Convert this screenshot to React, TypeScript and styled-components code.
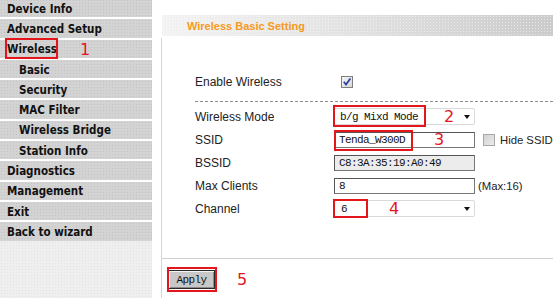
import React from "react"
import styled, { createGlobalStyle } from "styled-components"

// router admin page: left menu + "Wireless Basic Setting" form with red callouts

const Global = createGlobalStyle`
  html, body { margin:0; padding:0; background:#fff; }
  body { width:553px; height:298px; overflow:hidden; font-family:"Liberation Sans", Arial, sans-serif; }
`

const RED = "#e4161c"

const Page = styled.div`
  display:flex;
  width:553px;
  height:298px;
`

// ---- sidebar

const Sidebar = styled.nav`
  width:152px;
  flex:none;
  display:flex;
  flex-direction:column;
  gap:2px;
  margin-top:-1px;
  background:#fff;
`

interface IMenuItem {
    $sub?: boolean
}

const MenuItem = styled.div<IMenuItem>`
  height:18.3px;
  display:flex;
  align-items:center;
  padding-left:${(p) => (p.$sub ? "19px" : "7px")};
  padding-top:1px;
  box-sizing:border-box;
  background-color:#d3d3d3;
  background-image:radial-gradient(#c4c4c4 0.6px, transparent 0.7px);
  background-size:3px 3px;
  font-family:"DejaVu Sans Condensed", "DejaVu Sans", sans-serif;
  font-weight:bold;
  font-size:11.5px;
  color:#111;
  white-space:nowrap;
`

const Filler = styled.div`
  flex:1;
  margin-top:-2px;
  background-color:#efefef;
  background-image:radial-gradient(#e2e2e2 0.6px, transparent 0.7px);
  background-size:3px 3px;
`

// ---- red callouts (drawn on top of the screenshot content)

const Marked = styled.span`
  position:relative;
  display:inline-flex;
  align-items:center;
`

interface IBox {
    $top: number
    $left: number
    $w: number
    $h: number
}

const RedBox = styled.span<IBox>`
  position:absolute;
  top:${(p) => p.$top}px;
  left:${(p) => p.$left}px;
  width:${(p) => p.$w}px;
  height:${(p) => p.$h}px;
  box-sizing:border-box;
  border:2px solid ${RED};
  pointer-events:none;
`

interface INum {
    $left: number
}

const Num = styled.span<INum>`
  position:absolute;
  left:${(p) => p.$left}px;
  top:50%;
  transform:translateY(-50%);
  font-family:"DejaVu Sans", sans-serif;
  font-size:16px;
  line-height:16px;
  color:${RED};
`

const InlineNum = styled.span`
  margin-left:23px;
  font-family:"DejaVu Sans", sans-serif;
  font-weight:normal;
  font-size:16px;
  color:${RED};
`

// ---- main area

const Main = styled.main`
  flex:1;
  margin-left:9px;
  padding-top:15px;
  display:flex;
  flex-direction:column;
  min-width:0;
`

const TitleBar = styled.div`
  height:21px;
  margin-left:1px;
  display:flex;
  align-items:center;
  padding-left:25px;
  background-color:#e4e4e4;
  background-image:
    radial-gradient(rgba(255,255,255,0.5) 0.6px, transparent 0.7px),
    linear-gradient(to right, #f3f3f3, #e3e3e3 45%, #cbcbcb);
  background-size:3px 3px, 100% 100%;
  color:#f59a23;
  font-weight:bold;
  font-size:11px;
`

const Panel = styled.section`
  flex:1;
  margin-top:2px;
  border-left:1px solid #d6d6d6;
  display:flex;
  flex-direction:column;
`

const Form = styled.div`
  padding:33px 0 0 33px;
  display:flex;
  flex-direction:column;
`

interface IRow {
    $h: number
}

const Row = styled.div<IRow>`
  height:${(p) => p.$h}px;
  display:grid;
  grid-template-columns:139px auto;
  align-items:center;
`

const Label = styled.span`
  font-size:12px;
  color:#222;
`

const Control = styled.div`
  display:flex;
  align-items:center;
  white-space:nowrap;
`

const Rule = styled.div`
  margin:8px 0 3px;
  border-top:1px dashed #8e8e8e;
`

const BottomRule = styled.div`
  margin-top:38px;
  border-top:1px solid #d0d0d0;
`

const mono = `"Liberation Mono", "DejaVu Sans Mono", monospace`

interface ISelect {
    $w: number
}

const Select = styled.div<ISelect>`
  width:${(p) => p.$w}px;
  height:17px;
  box-sizing:border-box;
  border:1px solid #dadada;
  border-radius:2px;
  background:#fff;
  display:flex;
  align-items:center;
  padding-left:6px;
  font-family:${mono};
  font-size:11px;
  letter-spacing:-0.6px;
  color:#111;
`

const Arrow = styled.span`
  position:absolute;
  right:5px;
  top:7px;
  width:0;
  height:0;
  border-left:3.5px solid transparent;
  border-right:3.5px solid transparent;
  border-top:4px solid #111;
`

interface IInput {
    $grey?: boolean
}

const Input = styled.div<IInput>`
  width:141px;
  height:16px;
  box-sizing:border-box;
  border:1px solid #777;
  border-top-color:#555;
  border-left-color:#555;
  background:${(p) => (p.$grey ? "#ececec" : "#fff")};
  display:flex;
  align-items:center;
  padding-left:4px;
  font-family:${mono};
  font-size:11px;
  letter-spacing:-0.6px;
  color:#111;
`

interface ISideText {
    $gap: number
}

const SideText = styled.span<ISideText>`
  font-size:11.3px;
  color:#222;
  margin-left:${(p) => p.$gap}px;
  white-space:nowrap;
`

const BoxSlot = styled.span`
  margin-left:8px;
  display:flex;
`

const Footer = styled.div`
  padding:11px 0 0 6px;
  display:flex;
`

const ApplyButton = styled.button`
  width:47px;
  height:19px;
  padding:0;
  border:1px solid #2a2a2a;
  background:#c8c8c8;
  box-shadow:inset 1px 1px 0 #f4f4f4, inset -1px -1px 0 #8a8a8a;
  font-family:${mono};
  font-size:11px;
  letter-spacing:-0.6px;
  color:#111;
`

const CheckBox: React.FC<{ checked?: boolean }> = ({ checked }) => (
    <svg width="12" height="12" viewBox="0 0 12 12" style={{ display: "block" }}>
        <defs>
            <linearGradient id={checked ? "cbOn" : "cbOff"} x1="0" y1="0" x2="1" y2="1">
                <stop offset="0" stopColor={checked ? "#f6f6f6" : "#d2d2d2"} />
                <stop offset="1" stopColor={checked ? "#d6d6d6" : "#ececec"} />
            </linearGradient>
        </defs>
        <rect x="0.5" y="0.5" width="11" height="11" fill={`url(#${checked ? "cbOn" : "cbOff"})`} stroke={checked ? "#7f7f7f" : "#a8a8a8"} />
        {checked && <polyline points="2.8,5.8 5,8.6 9.4,2.6" fill="none" stroke="#2b3f9e" strokeWidth="1.7" />}
    </svg>
)

const menu: { label: string; sub?: boolean }[] = [
    { label: "Device Info" },
    { label: "Advanced Setup" },
    { label: "Wireless" },
    { label: "Basic", sub: true },
    { label: "Security", sub: true },
    { label: "MAC Filter", sub: true },
    { label: "Wireless Bridge", sub: true },
    { label: "Station Info", sub: true },
    { label: "Diagnostics" },
    { label: "Management" },
    { label: "Exit" },
    { label: "Back to wizard" },
]

export default function App() {
    return (
        <Page>
            <Global />
            <Sidebar>
                {menu.map((m) =>
                    m.label === "Wireless" ? (
                        <MenuItem key={m.label}>
                            <Marked>
                                Wireless
                                <RedBox $top={-4} $left={-2} $w={53} $h={21} />
                            </Marked>
                            <InlineNum>1</InlineNum>
                        </MenuItem>
                    ) : (
                        <MenuItem key={m.label} $sub={m.sub}>
                            {m.label}
                        </MenuItem>
                    )
                )}
                <Filler />
            </Sidebar>

            <Main>
                <TitleBar>Wireless Basic Setting</TitleBar>
                <Panel>
                    <Form>
                        <Row $h={22}>
                            <Label>Enable Wireless</Label>
                            <Control style={{ paddingLeft: 7 }}>
                                <CheckBox checked />
                            </Control>
                        </Row>
                        <Rule />
                        <Row $h={23}>
                            <Label>Wireless Mode</Label>
                            <Control>
                                <Marked style={{ marginLeft: -1 }}>
                                    <Select $w={142}>b/g Mixd Mode</Select>
                                    <Arrow />
                                    <RedBox $top={-3} $left={0} $w={93} $h={22} />
                                    <Num $left={111}>2</Num>
                                </Marked>
                            </Control>
                        </Row>
                        <Row $h={23}>
                            <Label>SSID</Label>
                            <Control>
                                <Marked>
                                    <Input>Tenda_W300D</Input>
                                    <RedBox $top={-2} $left={0} $w={79} $h={21} />
                                    <Num $left={100}>3</Num>
                                </Marked>
                                <BoxSlot>
                                    <CheckBox />
                                </BoxSlot>
                                <SideText $gap={5}>Hide SSID</SideText>
                            </Control>
                        </Row>
                        <Row $h={23}>
                            <Label>BSSID</Label>
                            <Control>
                                <Input $grey>C8:3A:35:19:A0:49</Input>
                            </Control>
                        </Row>
                        <Row $h={23}>
                            <Label>Max Clients</Label>
                            <Control>
                                <Input>8</Input>
                                <SideText $gap={3}>(Max:16)</SideText>
                            </Control>
                        </Row>
                        <Row $h={23}>
                            <Label>Channel</Label>
                            <Control>
                                <Marked>
                                    <Select $w={141}>6</Select>
                                    <Arrow />
                                    <RedBox $top={-1} $left={-1} $w={35} $h={19} />
                                    <Num $left={55}>4</Num>
                                </Marked>
                            </Control>
                        </Row>
                    </Form>
                    <BottomRule />
                    <Footer>
                        <Marked>
                            <ApplyButton>Apply</ApplyButton>
                            <RedBox $top={-3} $left={-1} $w={50} $h={25} />
                            <Num $left={69}>5</Num>
                        </Marked>
                    </Footer>
                </Panel>
            </Main>
        </Page>
    )
}
